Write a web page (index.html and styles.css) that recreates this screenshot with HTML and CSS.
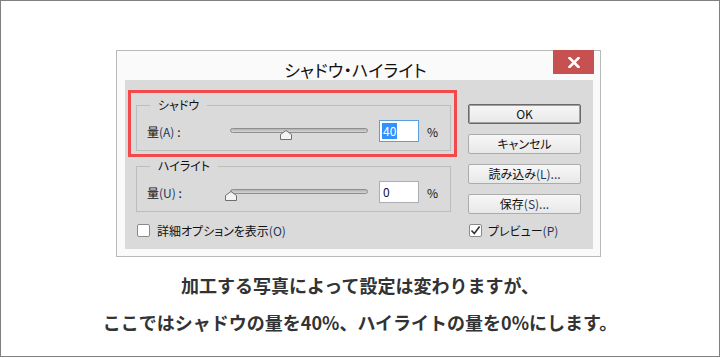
FILE: index.html
```html
<!DOCTYPE html>
<html lang="ja">
<head>
<meta charset="utf-8">
<link rel="stylesheet" href="styles.css">
</head>
<body>
<div class="frame">
  <div class="dialog">
    <div class="titlebar">
      <span class="spacer"></span>
      <div class="title">シャドウ・ハイライト</div>
      <div class="close">
        <svg width="12" height="11" viewBox="0 0 12 11"><path d="M1.5 1 L10.5 10 M10.5 1 L1.5 10" stroke="#fff" stroke-width="2.6" stroke-linecap="square"/></svg>
      </div>
    </div>
    <div class="panel">
      <div class="left">
        <div class="mark">
          <fieldset class="group">
            <legend>シャドウ</legend>
            <div class="row">
              <span class="label">量<span class="acc">(A)</span> :</span>
              <div class="slider">
                <div class="track"></div>
                <svg class="thumb" style="left:50px" width="12" height="10" viewBox="0 0 12 10"><path d="M0.5 4.5 L6 0.5 L11.5 4.5 L11.5 9.5 L0.5 9.5 Z" fill="#f3f3f3" stroke="#6f6f6f"/></svg>
              </div>
              <div class="field focus"><span class="sel">40</span></div>
              <span class="pct">%</span>
            </div>
          </fieldset>
        </div>
        <fieldset class="group hl">
          <legend>ハイライト</legend>
          <div class="row">
            <span class="label">量<span class="acc">(U)</span> :</span>
            <div class="slider">
              <div class="track"></div>
              <svg class="thumb" style="left:-5px" width="12" height="10" viewBox="0 0 12 10"><path d="M0.5 4.5 L6 0.5 L11.5 4.5 L11.5 9.5 L0.5 9.5 Z" fill="#f3f3f3" stroke="#6f6f6f"/></svg>
            </div>
            <div class="field"><span class="val">0</span></div>
            <span class="pct">%</span>
          </div>
        </fieldset>
        <div class="check detail">
          <span class="box"></span>
          <span class="ctext">詳細オプションを表示<span class="acc">(O)</span></span>
        </div>
      </div>
      <div class="right">
        <div class="btn default">OK</div>
        <div class="btn">キャンセル</div>
        <div class="btn">読み込み<span class="acc">(L)...</span></div>
        <div class="btn">保存<span class="acc">(S)...</span></div>
        <div class="check preview">
          <span class="box"><svg width="11" height="11" viewBox="0 0 11 11"><path d="M1.5 5.5 L4.3 8.6 L9.6 1.6" fill="none" stroke="#333" stroke-width="1.6"/></svg></span>
          <span class="ctext">プレビュー<span class="acc">(P)</span></span>
        </div>
      </div>
    </div>
  </div>
  <div class="caption">
    <p>加工する写真によって設定は変わりますが、</p>
    <p>ここではシャドウの量を40%、ハイライトの量を0%にします。</p>
  </div>
</div>
</body>
</html>
```

FILE: styles.css
```css
* { box-sizing: border-box; }
html, body { margin: 0; padding: 0; background: #fff; }
body { font-family: "Noto Sans CJK JP", "Noto Sans", sans-serif; }

.frame {
  width: 720px;
  height: 357px;
  border: 1px solid #808080;
  background: #fff;
  display: flex;
  flex-direction: column;
}

.dialog {
  margin: 49px 0 0 115px;
  width: 485px;
  border: 1px solid #b9b9b9;
  background: #fafafa;
  display: flex;
  flex-direction: column;
}

.titlebar {
  height: 29px;
  display: grid;
  grid-template-columns: 1fr auto 1fr;
  padding-right: 6px;
}
.title {
  align-self: end;
  font-size: 17px;
  line-height: 20px;
  color: #111;
  font-feature-settings: "palt";
  letter-spacing: 0.2px;
}
.close {
  justify-self: end;
  align-self: start;
  width: 41px;
  height: 24px;
  background: #c75050;
  display: flex;
  align-items: center;
  justify-content: center;
  margin-top: -1px;
}

.panel {
  margin: 0 7px 7px 8px;
  background: #dadada;
  padding: 10px 12px 11px 3px;
  display: flex;
  gap: 11px;
  font-size: 12px;
  color: #111;
  font-feature-settings: "palt";
}

.left { width: 329px; display: flex; flex-direction: column; }

.mark {
  border: 3px solid #f24a4a;
  padding: 5px 3px 3px 5px;
}

.group {
  margin: 0;
  width: 315px;
  border: 1px solid #bdbdbd;
  padding: 8px 0 8px 10px;
  min-width: 0;
}
.group legend {
  font-size: 12px;
  line-height: 14px;
  padding: 0 8px;
  margin-left: 3px;
  color: #111;
}
.group.hl { margin: 2px 0 0 8px; }

.row {
  height: 22px;
  display: flex;
  align-items: center;
}
.label { width: 83px; line-height: 14px; padding-top: 1px; }
.acc { color: #1f3659; }

.slider { position: relative; width: 138px; height: 22px; }
.track {
  margin-top: 8px;
  height: 5px;
  border: 1px solid #8e8e8e;
  border-radius: 3px;
  background: linear-gradient(#b4b4b4, #d4d4d4);
}
.thumb { position: absolute; top: 10px; }

.field {
  margin-left: 11px;
  width: 40px;
  height: 22px;
  background: #fff;
  border: 1px solid #abadb3;
  display: flex;
  align-items: center;
  padding-left: 2px;
  line-height: 16px;
}
.field.focus { border-color: #5a9fe0; }
.sel { background: #3390ff; color: #fff; padding: 0 1px; }
.val { padding-left: 1px; color: #101040; }
.pct { margin-left: 8px; }

.check {
  height: 16px;
  display: flex;
  align-items: center;
}
.check .box {
  width: 13px;
  height: 13px;
  border: 1px solid #8a8a8a;
  border-radius: 2px;
  background: #fff;
  display: flex;
  align-items: center;
  justify-content: center;
}
.detail { margin: 10px 0 0 9px; }
.detail .ctext { margin-left: 7px; }
.preview { margin: 8px 0 0 1px; }
.preview .ctext { margin-left: 6px; }

.right {
  width: 113px;
  padding-top: 14px;
  display: flex;
  flex-direction: column;
  gap: 10px;
}
.right .check { margin-top: -2px; }
.btn {
  height: 20px;
  border: 1px solid #acacac;
  border-radius: 2px;
  background: linear-gradient(#f7f7f7, #e8e8e8);
  display: flex;
  align-items: center;
  justify-content: center;
  font-size: 12px;
  line-height: 14px;
}
.btn.default {
  border-color: #6a6a6a;
  box-shadow: inset 0 0 0 1px #a0a0a0;
}

.caption {
  margin-top: 10px;
  text-align: center;
  font-size: 18px;
  font-weight: 700;
  line-height: 37px;
  color: #333;
}
.caption p { margin: 0; }
```
